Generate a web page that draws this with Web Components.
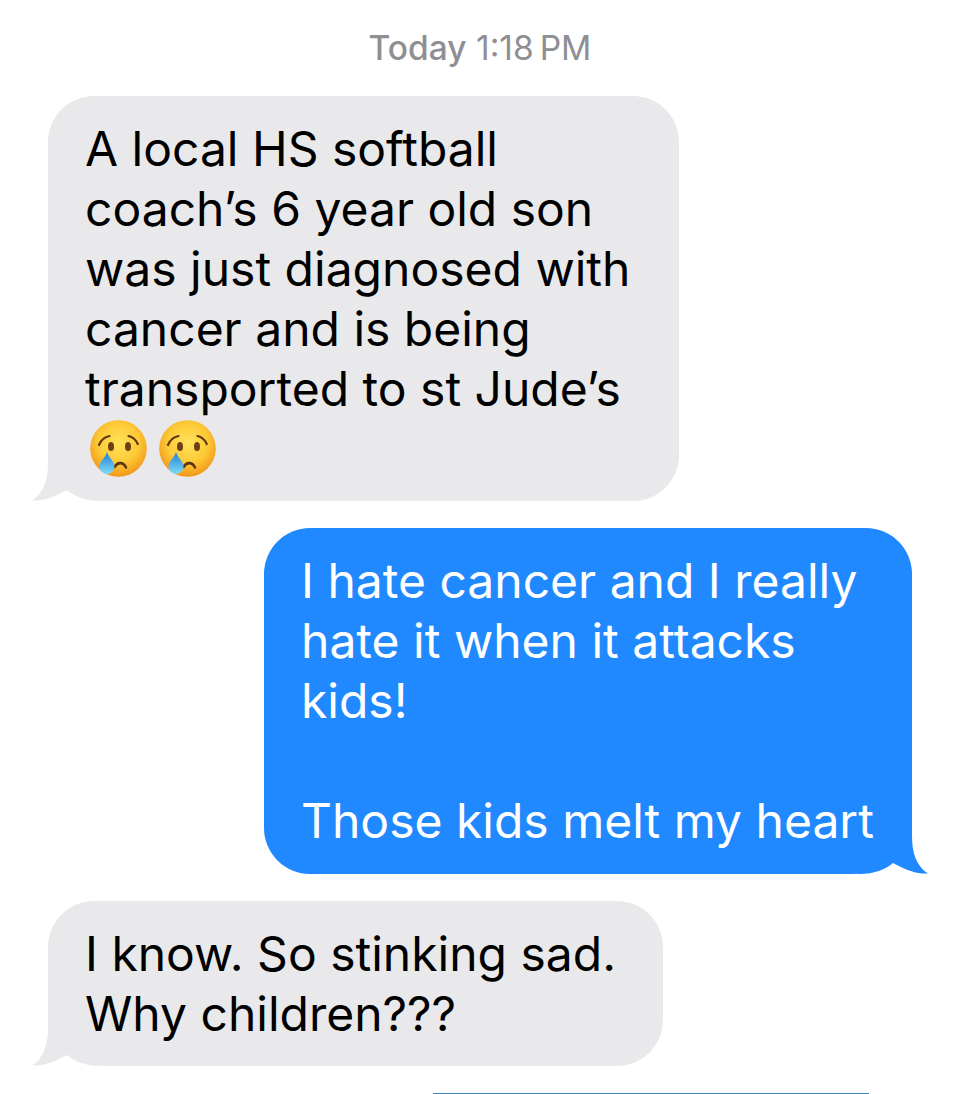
<!DOCTYPE html>
<html>
<head>
<meta charset="utf-8">
<title>Messages</title>
<style>
html, body { margin: 0; padding: 0; height: 1094px; overflow: hidden; background: #fff; }
body { font-family: Inter, "Liberation Sans", sans-serif; }
</style>
</head>
<body>
<chat-thread>
  <chat-stamp><b>Today</b> 1:18&#8201;PM</chat-stamp>
  <chat-bubble side="in" style="--w:631px">A local HS softball<br>coach’s 6 year old son<br>was just diagnosed with<br>cancer and is being<br>transported to st Jude’s<br><cry-emoji></cry-emoji><cry-emoji></cry-emoji></chat-bubble>
  <chat-bubble side="out" style="--w:648px">I hate cancer and I really<br>hate it when it attacks<br>kids!<br><br>Those kids melt my heart</chat-bubble>
  <chat-bubble side="in" style="--w:615px">I know. So stinking sad.<br>Why children???</chat-bubble>
  <chat-peek></chat-peek>
</chat-thread>

<script>
class ChatThread extends HTMLElement {
  constructor() {
    super();
    this.attachShadow({ mode: "open" });
    this.shadowRoot.innerHTML = `<style>
:host { display: flex; flex-direction: column; gap: 27px; padding: 0 48px; }
</style><slot></slot>`;
  }
}

class ChatStamp extends HTMLElement {
  constructor() {
    super();
    this.attachShadow({ mode: "open" });
    this.shadowRoot.innerHTML = `<style>
:host { display: block; height: 39px; padding-top: 30px;
  text-align: center; color: #8e8e93; font-size: 33.5px; line-height: 36px; }
::slotted(b) { font-weight: 500; }
</style><slot></slot>`;
  }
}

class ChatBubble extends HTMLElement {
  constructor() {
    super();
    this.attachShadow({ mode: "open" });
    this.shadowRoot.innerHTML = `<style>
:host { display: block; position: relative; box-sizing: border-box; width: var(--w);
  padding: 23px 20px 22px 37px; border-radius: 46px 46px 46px 60px;
  background: #e9e9eb; color: #000; font-size: 48px; line-height: 60px; white-space: nowrap; }
:host([side="out"]) { align-self: flex-end; padding-bottom: 23px; border-radius: 46px 46px 60px 46px; background: #2089ff; color: #fff; }
.text { position: relative; z-index: 1; }
svg { position: absolute; bottom: 0; left: -16px; width: 70px; height: 60px; fill: #e9e9eb; }
:host([side="out"]) svg { left: auto; right: -16px; transform: scaleX(-1); fill: #2089ff; }
</style>
<svg viewBox="0 0 70 60"><path d="M16 0 L16 22 C16 38 12 52 0 59.500 C9 60 19 58 35 49 C42 55 52 60 70 60 L70 0Z"/></svg>
<div class="text"><slot></slot></div>`;
  }
}

// only the top row of the next blue bubble shows at the bottom of the shot
class ChatPeek extends HTMLElement {
  constructor() {
    super();
    this.attachShadow({ mode: "open" });
    this.shadowRoot.innerHTML = `<style>
:host { display: block; align-self: flex-end; width: 436px; height: 1px; margin-right: 43px;
  background: #3a86bd; }
</style>`;
  }
}

class CryEmoji extends HTMLElement {
  constructor() {
    super();
    this.attachShadow({ mode: "open" });
    this.shadowRoot.innerHTML = `<style>
:host { display: inline-block; width: 57px; height: 57px; margin: 0 12px 0 5px; vertical-align: -11px; }
:host(:last-child) { margin: 0; }
svg { display: block; width: 100%; height: 100%; }
</style>
<svg viewBox="0 0 57 57">
  <defs>
    <radialGradient id="face" cx="50%" cy="40%" r="58%">
      <stop offset="0" stop-color="#ffe35a"/><stop offset=".62" stop-color="#fdc936"/><stop offset="1" stop-color="#f39a1c"/>
    </radialGradient>
    <linearGradient id="tear" x1="0" y1="0" x2="0" y2="1">
      <stop offset="0" stop-color="#1f7fd4"/><stop offset="1" stop-color="#7fdcf8"/>
    </linearGradient>
  </defs>
  <circle cx="28.5" cy="28.5" r="28.3" fill="url(#face)"/>
  <path d="M9 25 C11 20 14.500 17 19.500 16" fill="none" stroke="#5f3510" stroke-width="2.2" stroke-linecap="round"/>
  <path d="M47.800 24 C46 20 43 17 38.500 16" fill="none" stroke="#5f3510" stroke-width="2.2" stroke-linecap="round"/>
  <ellipse cx="21" cy="26.500" rx="3" ry="4.600" fill="#6e3f12"/>
  <ellipse cx="38" cy="26.500" rx="3" ry="4.600" fill="#6e3f12"/>
  <path d="M24.500 47 C27 42.500 33 41 36 47.500" fill="none" stroke="#5f3510" stroke-width="2.600" stroke-linecap="round"/>
  <path d="M17 32 C18.500 38 24.500 41 24.500 46.500 A7.500 7.500 0 0 1 9.500 46.500 C9.500 41 15.500 38 17 32Z" fill="url(#tear)"/>
</svg>`;
  }
}

customElements.define("chat-thread", ChatThread);
customElements.define("chat-stamp", ChatStamp);
customElements.define("chat-bubble", ChatBubble);
customElements.define("chat-peek", ChatPeek);
customElements.define("cry-emoji", CryEmoji);
</script>
</body>
</html>
